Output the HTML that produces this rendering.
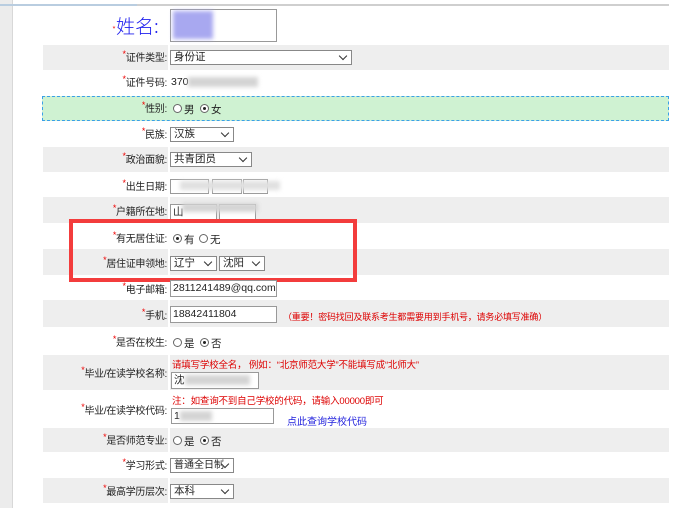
<!DOCTYPE html>
<html><head><meta charset="utf-8"><style>
*{margin:0;padding:0;box-sizing:border-box}
body{width:677px;height:520px;background:#fff;position:relative;overflow:hidden;font-family:"Liberation Sans","Noto Sans CJK SC",sans-serif;font-size:10.5px;color:#222}
.a{position:absolute}
.row{position:absolute;left:43px;width:626px}
.row .l{position:absolute;left:0;top:0;bottom:0;width:125px}
.row .v{position:absolute;left:127px;top:0;bottom:0;right:0}
.g .l,.g .v{background:#eeeeee}
.lab{position:absolute;white-space:nowrap;text-align:right;font-size:10px;letter-spacing:-0.3px;margin-top:-2px}
.lab b{color:#e00;font-weight:normal;font-size:9px;vertical-align:top}
.sel{position:absolute;height:15px;border:1px solid #888;background:#fff;padding-left:3px;line-height:13px;font-size:10.5px;overflow:hidden;white-space:nowrap}
.sel:after{content:"";position:absolute;right:5px;top:2px;width:5px;height:5px;border-right:1.5px solid #333;border-bottom:1.5px solid #333;transform:rotate(45deg);background:#fff}
.inp{position:absolute;border:1px solid #999;background:#fff;padding-left:2px;font-size:10.5px}
.rad{position:absolute;width:9px;height:9px;border:1px solid #666;border-radius:50%;background:#fff}
.rad.on:after{content:"";position:absolute;left:2px;top:2px;width:3px;height:3px;border-radius:50%;background:#222}
.blur{position:absolute;background:#d4d4d4;filter:blur(2px)}
.red{color:#d00;font-size:9.5px;position:absolute;white-space:nowrap;letter-spacing:-0.2px}
</style></head><body>
<div class="a" style="left:0;top:0;width:13px;height:508px;background:#ececec;border-right:1px solid #d8d8d8"></div>
<div class="a" style="left:0;top:4px;width:137px;height:2px;background:#b9cde0"></div>
<div class="a" style="left:137px;top:4px;width:532px;height:2px;background:#cfcfcf"></div>

<div class="a" style="left:112px;top:12px;font-size:19px;color:#2222ee;font-family:'Noto Sans CJK SC',sans-serif;font-weight:300"><span style="color:#e00;font-size:9px">*</span>姓名:</div>
<div class="inp" style="left:170px;top:9px;width:107px;height:33px"></div>
<div class="blur" style="left:173px;top:11px;width:40px;height:28px;background:#a8a8f0"></div>

<div class="row g" style="top:45px;height:25px"><div class="l"></div><div class="v"></div></div>
<div class="lab" style="right:510px;top:51px"><b>*</b>证件类型:</div>
<div class="sel" style="left:170px;top:50px;width:182px">身份证</div>

<div class="lab" style="right:510px;top:76px"><b>*</b>证件号码:</div>
<div class="a" style="left:171px;top:76px">370</div>
<div class="blur" style="left:188px;top:77px;width:70px;height:10px"></div>

<div class="a" style="left:42px;top:96px;width:627px;height:25px;background:#cff2d2;border:1px dashed #3aa0e8"></div>
<div class="lab" style="right:510px;top:102px"><b>*</b>性别:</div>
<div class="rad" style="left:173px;top:104px"></div><div class="a" style="left:184px;top:102px">男</div>
<div class="rad on" style="left:200px;top:104px"></div><div class="a" style="left:211px;top:102px">女</div>

<div class="lab" style="right:510px;top:128px"><b>*</b>民族:</div>
<div class="sel" style="left:170px;top:127px;width:64px">汉族</div>

<div class="row g" style="top:147px;height:25px"><div class="l"></div><div class="v"></div></div>
<div class="lab" style="right:510px;top:153px"><b>*</b>政治面貌:</div>
<div class="sel" style="left:170px;top:152px;width:82px">共青团员</div>

<div class="lab" style="right:510px;top:180px"><b>*</b>出生日期:</div>
<div class="inp" style="left:170px;top:179px;width:39px;height:15px"></div>
<div class="inp" style="left:212px;top:179px;width:30px;height:15px"></div>
<div class="inp" style="left:243px;top:179px;width:25px;height:15px"></div>
<div class="blur" style="left:180px;top:181px;width:100px;height:9px;background:#e0e0e0"></div>

<div class="row g" style="top:197px;height:26px"><div class="l"></div><div class="v"></div></div>
<div class="lab" style="right:510px;top:205px"><b>*</b>户籍所在地:</div>
<div class="inp" style="left:170px;top:204px;width:47px;height:16px;line-height:14px">山</div>
<div class="inp" style="left:219px;top:204px;width:37px;height:16px"></div>
<div class="blur" style="left:182px;top:203px;width:76px;height:9px"></div>

<div class="lab" style="right:510px;top:232px"><b>*</b>有无居住证:</div>
<div class="rad on" style="left:173px;top:234px"></div><div class="a" style="left:184px;top:232px">有</div>
<div class="rad" style="left:199px;top:234px"></div><div class="a" style="left:210px;top:232px">无</div>

<div class="row g" style="top:249px;height:26px"><div class="l"></div><div class="v"></div></div>
<div class="lab" style="right:510px;top:257px"><b>*</b>居住证申领地:</div>
<div class="sel" style="left:170px;top:256px;width:47px">辽宁</div>
<div class="sel" style="left:219px;top:256px;width:46px">沈阳</div>

<div class="a" style="left:69px;top:219px;width:288px;height:63px;border:4px solid #f33c3c"></div>

<div class="lab" style="right:510px;top:283px"><b>*</b>电子邮箱:</div>
<div class="inp" style="left:170px;top:280px;width:107px;height:17px;line-height:15px">2811241489@qq.com</div>

<div class="row g" style="top:300px;height:27px"><div class="l"></div><div class="v"></div></div>
<div class="lab" style="right:510px;top:309px"><b>*</b>手机:</div>
<div class="inp" style="left:170px;top:306px;width:107px;height:17px;line-height:15px">18842411804</div>
<div class="red" style="left:283px;top:310px;font-size:9px">（重要！密码找回及联系考生都需要用到手机号，请务必填写准确）</div>

<div class="lab" style="right:510px;top:336px"><b>*</b>是否在校生:</div>
<div class="rad" style="left:173px;top:338px"></div><div class="a" style="left:184px;top:336px">是</div>
<div class="rad on" style="left:200px;top:338px"></div><div class="a" style="left:211px;top:336px">否</div>

<div class="row g" style="top:355px;height:35px"><div class="l"></div><div class="v"></div></div>
<div class="lab" style="right:510px;top:367px"><b>*</b>毕业/在读学校名称:</div>
<div class="red" style="left:172px;top:357px">请填写学校全名， 例如：“北京师范大学”不能填写成“北师大”</div>
<div class="inp" style="left:171px;top:372px;width:88px;height:17px;line-height:15px">沈</div>
<div class="blur" style="left:185px;top:375px;width:65px;height:10px"></div>

<div class="lab" style="right:510px;top:404px"><b>*</b>毕业/在读学校代码:</div>
<div class="red" style="left:172px;top:393px">注：如查询不到自己学校的代码，请输入00000即可</div>
<div class="inp" style="left:171px;top:408px;width:103px;height:16px;line-height:14px">1</div>
<div class="blur" style="left:180px;top:411px;width:32px;height:10px"></div>
<div class="a" style="left:287px;top:413px;color:#22d;font-size:10px">点此查询学校代码</div>

<div class="row g" style="top:428px;height:24px"><div class="l"></div><div class="v"></div></div>
<div class="lab" style="right:510px;top:434px"><b>*</b>是否师范专业:</div>
<div class="rad" style="left:173px;top:436px"></div><div class="a" style="left:184px;top:434px">是</div>
<div class="rad on" style="left:200px;top:436px"></div><div class="a" style="left:211px;top:434px">否</div>

<div class="lab" style="right:510px;top:459px"><b>*</b>学习形式:</div>
<div class="sel" style="left:170px;top:458px;width:64px;font-size:10px">普通全日制</div>

<div class="row g" style="top:478px;height:25px"><div class="l"></div><div class="v"></div></div>
<div class="lab" style="right:510px;top:485px"><b>*</b>最高学历层次:</div>
<div class="sel" style="left:170px;top:484px;width:64px">本科</div>
</body></html>
